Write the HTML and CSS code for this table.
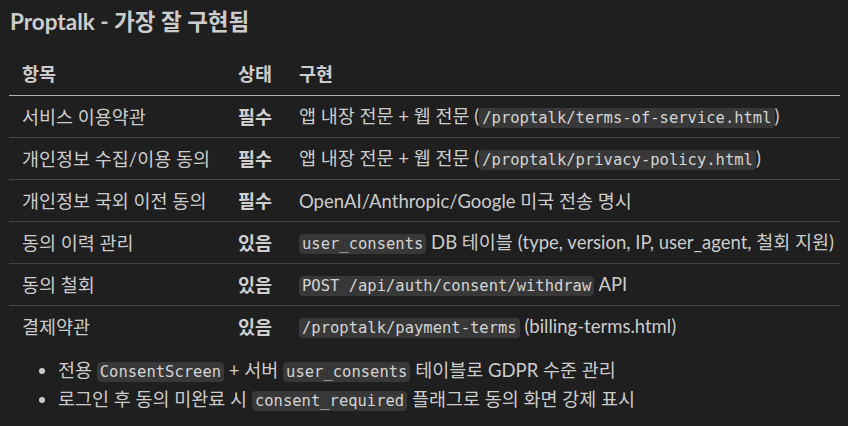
FILE: index.html
```html
<!DOCTYPE html>
<html lang="ko">
<head>
<meta charset="utf-8">
<link rel="stylesheet" href="styles.css">
</head>
<body>
<h3 class="title">Proptalk - 가장 잘 구현됨</h3>
<table class="tbl">
  <colgroup>
    <col class="c1"><col class="c2"><col class="c3">
  </colgroup>
  <thead>
    <tr><th>항목</th><th>상태</th><th>구현</th></tr>
  </thead>
  <tbody>
    <tr><td>서비스 이용약관</td><td><b>필수</b></td><td>앱 내장 전문 + 웹 전문 (<code>/proptalk/terms-of-service.html</code>)</td></tr>
    <tr><td>개인정보 수집/이용 동의</td><td><b>필수</b></td><td>앱 내장 전문 + 웹 전문 (<code>/proptalk/privacy-policy.html</code>)</td></tr>
    <tr><td>개인정보 국외 이전 동의</td><td><b>필수</b></td><td>OpenAI/Anthropic/Google 미국 전송 명시</td></tr>
    <tr><td>동의 이력 관리</td><td><b>있음</b></td><td><code>user_consents</code> DB 테이블 (type, version, IP, user_agent, 철회 지원)</td></tr>
    <tr><td>동의 철회</td><td><b>있음</b></td><td><code>POST /api/auth/consent/withdraw</code> API</td></tr>
    <tr><td>결제약관</td><td><b>있음</b></td><td><code>/proptalk/payment-terms</code> (billing-terms.html)</td></tr>
  </tbody>
</table>
<ul class="notes">
  <li>전용 <code>ConsentScreen</code> + 서버 <code>user_consents</code> 테이블로 GDPR 수준 관리</li>
  <li>로그인 후 동의 미완료 시 <code>consent_required</code> 플래그로 동의 화면 강제 표시</li>
</ul>
</body>
</html>
```

FILE: styles.css
```css
html, body {
  margin: 0;
  padding: 0;
  background: #1f1f1f;
}
body {
  color: #cccccc;
  font-family: Lato, "Noto Sans CJK KR", sans-serif;
  font-size: 18.5px;
  padding: 0 8px 0 9px;
}
.title {
  margin: 0;
  padding-top: 6px;
  height: 34px;
  font-size: 22.5px;
  font-weight: 700;
  line-height: 32px;
  padding-left: 1px;
}
.tbl {
  border-collapse: collapse;
  width: 831px;
  margin-top: 12px;
  table-layout: fixed;
}
.c1 { width: 216px; }
.c2 { width: 61px; }
.tbl th {
  text-align: left;
  font-weight: 700;
  height: 43px;
  padding: 0 13px;
  line-height: 24px;
  border-bottom: 1px solid #b0b0b0;
}
.tbl td {
  height: 41px;
  padding: 0 13px;
  line-height: 24px;
  white-space: nowrap;
  border-top: 1px solid #444444;
}
.tbl tbody tr:first-child td { border-top: none; }
.tbl td b { font-weight: 700; color: #d0d0d0; }
code {
  font-family: "DejaVu Sans Mono", monospace;
  font-size: 15.5px;
  background: #383838;
  border-radius: 4px;
  padding: 1px 3px;
  color: #d4d4d4;
}
.notes {
  margin: 10px 0 0;
  padding-left: 49px;
  line-height: 27px;
}
```
